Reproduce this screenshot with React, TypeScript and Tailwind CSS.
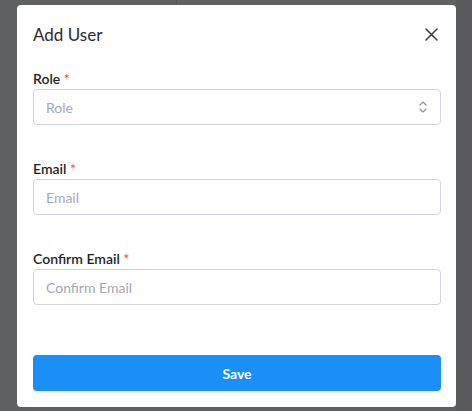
import React from 'react'

function Field({ label, placeholder, select }: { label: string; placeholder: string; select?: boolean }) {
  return (
    <div className="flex flex-col">
      <label className="h-5 text-[14px] font-semibold leading-5 text-[#1f1f1f]">
        {label} <span className="text-[#f0565a]">*</span>
      </label>
      <div className="flex h-9 items-center rounded-[4px] border border-[#d1d5db] bg-white pl-3 pr-[13px]">
        <span className="flex-1 text-[14px] text-[#a3a9b3]">{placeholder}</span>
        {select ? (
          <svg width="8" height="12" viewBox="0 0 8 12" fill="none" stroke="#8b9098" strokeWidth="1.1" strokeLinecap="round" strokeLinejoin="round">
            <path d="M1 4l3-3 3 3" />
            <path d="M1 8l3 3 3-3" />
          </svg>
        ) : null}
      </div>
    </div>
  )
}

export default function App() {
  return (
    <div className="flex h-[411px] w-[472px] overflow-hidden bg-[#5f6062] font-['Lato',sans-serif]">
      <div className="flex flex-1 flex-col">
        <div className="flex h-[5px]">
          <div className="w-[176px]" />
          <div className="w-px bg-[#555658]" />
        </div>
        <div className="ml-[17px] flex h-[402px] w-[439px] flex-col rounded-[4px] bg-white pl-4 pr-[15px]">
          <div className="flex h-[60px] items-center justify-between pb-[1px]">
            <h2 className="text-[17px] font-normal text-[#2b2b2b]">Add User</h2>
            <svg width="13" height="13" viewBox="0 0 13 13" stroke="#3a3a3a" strokeWidth="1.5" strokeLinecap="round" className="mr-[3px]">
              <path d="M1 1l11 11M12 1L1 12" />
            </svg>
          </div>
          <div className="mt-[4px] flex flex-col gap-[34px]">
            <Field label="Role" placeholder="Role" select />
            <Field label="Email" placeholder="Email" />
            <Field label="Confirm Email" placeholder="Confirm Email" />
          </div>
          <button className="mt-[50px] h-9 w-full rounded-[4px] bg-[#1b8ef8] text-[14px] font-bold text-white">Save</button>
        </div>
      </div>
      <div className="w-[16px] bg-[#58595b]" />
    </div>
  )
}
